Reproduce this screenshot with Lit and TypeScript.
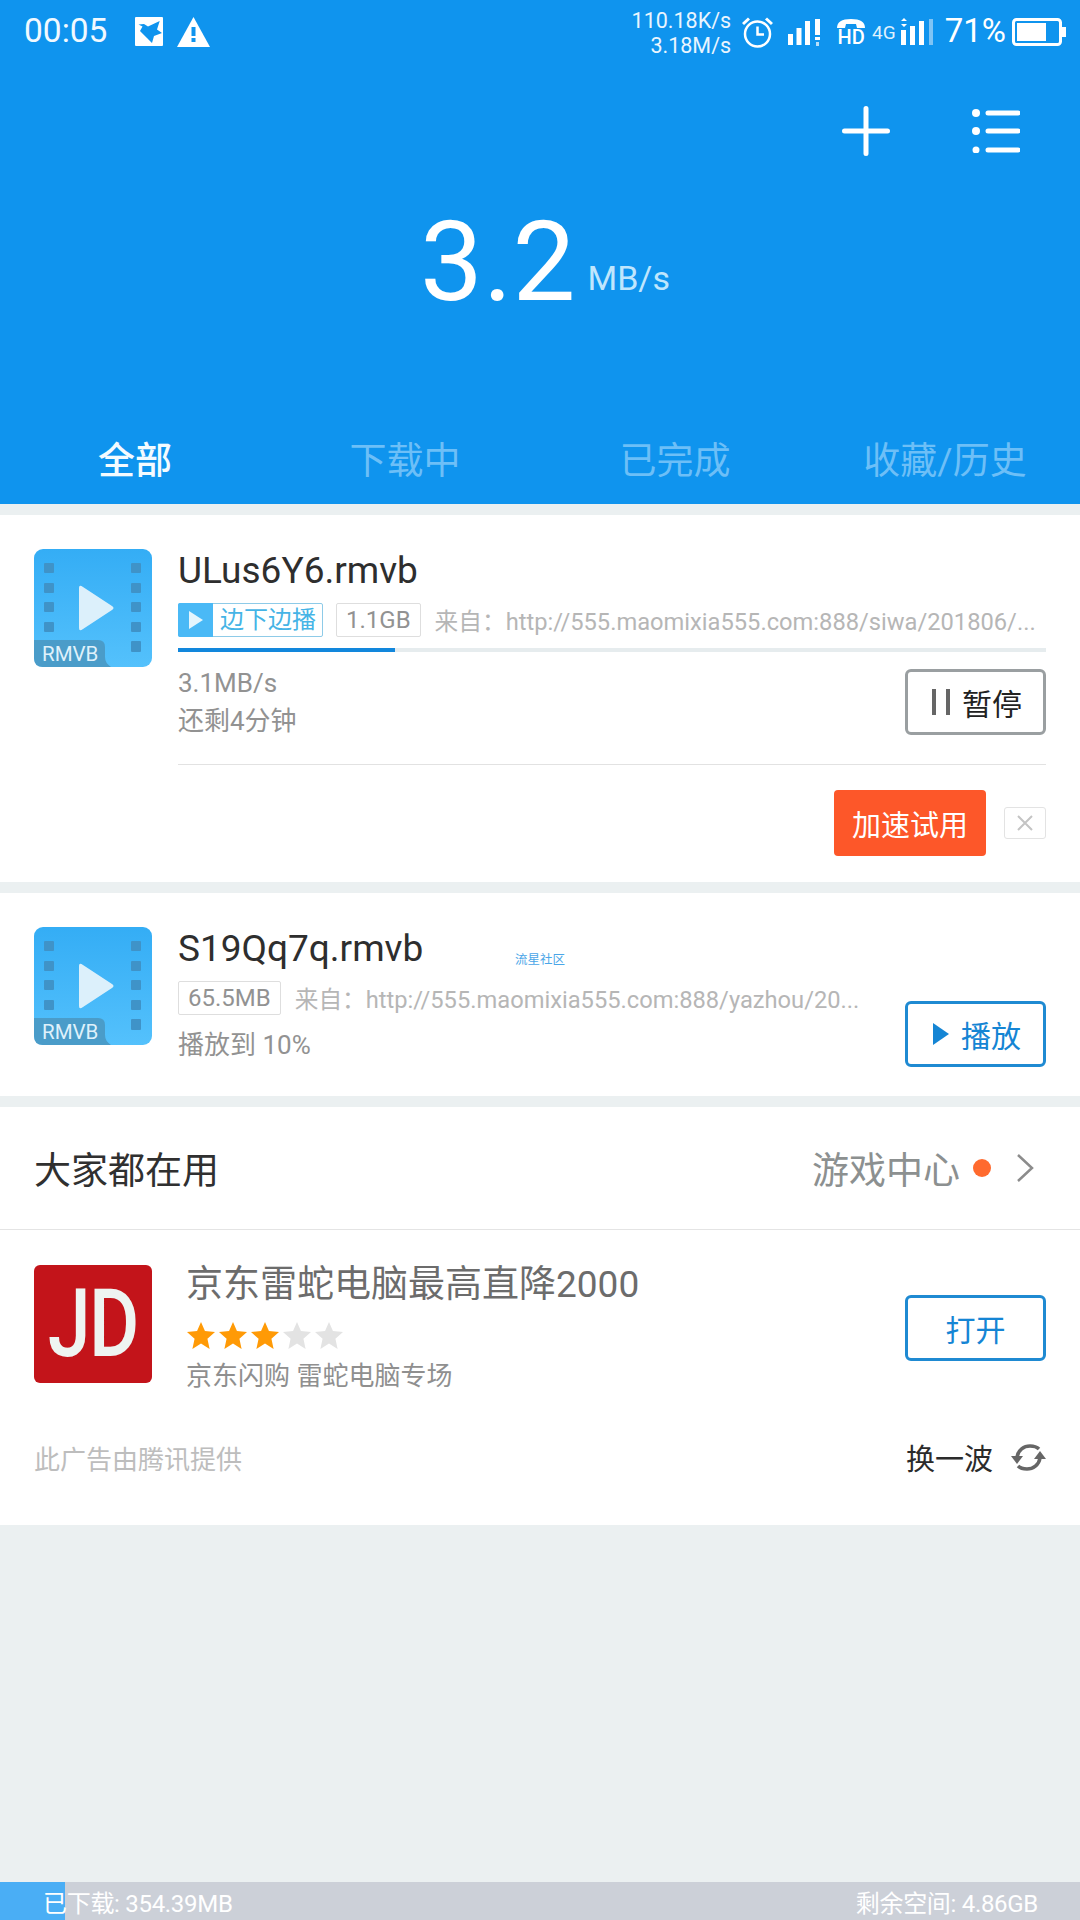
import { LitElement, html, css, svg } from "lit";
import { customElement } from "lit/decorators.js";

const fileIcon = () => html`<svg class="file-icon" viewBox="0 0 118 118" width="118" height="118">
  <defs><linearGradient id="fg" x1="0" y1="0" x2="0" y2="1"><stop offset="0" stop-color="#34adf5"/><stop offset="1" stop-color="#54c1fc"/></linearGradient></defs>
  <rect width="118" height="118" rx="9" fill="url(#fg)"/>
  ${[14, 34, 53, 73].map((y) => svg`<rect x="10" y="${y}" width="10" height="10" rx="1" fill="#3f93c8"/><rect x="97" y="${y}" width="10" height="10" rx="1" fill="#3f93c8"/>`)}
  <rect x="97" y="92" width="10" height="11" rx="1" fill="#3f93c8"/>
  <path d="M45 39 Q45 35 49 38 L78 57 Q81 59 78 61 L49 80 Q45 83 45 79 Z" fill="#dcf0fb"/>
  <path d="M0 91 H64 Q71 91 71 98 V108 Q71 114 77 118 H9 Q0 118 0 109 Z" fill="#4a9cc9"/>
  <text x="8" y="112" font-family="Roboto, sans-serif" font-size="20.500" fill="#dff1fb">RMVB</text>
</svg>`;

const star = (on: boolean) => html`<svg class="star" viewBox="0 0 27 26" width="28" height="27"><polygon points="13.5,0 17.3,8.7 27,9.7 19.7,16.1 21.8,26 13.5,20.8 5.2,26 7.3,16.1 0,9.7 9.7,8.7" fill=${on ? "#ff9a06" : "#e3e3e3"}/></svg>`;

@customElement("app-root")
export class AppRoot extends LitElement {
  static styles = css`
    :host { display: block; width: 1080px; height: 1920px; background: #ebf0f1; font-family: Roboto, "Noto Sans CJK SC", sans-serif; position: relative; overflow: hidden; }
    .page { display: flex; flex-direction: column; height: 1920px; }
    .head { background: #0f94ee; height: 504px; color: #fff; display: flex; flex-direction: column; }
    .status { display: flex; align-items: flex-start; height: 60px; padding: 0 14px 0 24px; }
    .time { font-size: 33.5px; line-height: 32px; margin-top: 15px; width: 111px; color: #f1f9ff; }
    .bird { margin-top: 17px; width: 28px; height: 29px; }
    .warn { margin: 17px 0 0 14px; }
    .spacer { flex: 1; }
    .net { font-size: 21.5px; line-height: 25px; text-align: right; margin-top: 8px; color: #e9f5fe; }
    .st-alarm { margin: 17px 0 0 11px; }
    .st-sig1 { margin: 18px 0 0 15px; }
    .hd { margin: 17px 0 0 12px; width: 34px; display: flex; flex-direction: column; align-items: center; }
    .hd span { font-size: 20px; line-height: 15px; font-weight: 500; margin-top: -1px; }
    .g4 { font-size: 19px; line-height: 20px; margin: 23px 0 0 4px; color: #dff0fd; }
    .st-sig2 { margin: 18px 0 0 3px; }
    .pct { font-size: 33px; line-height: 34px; margin: 14px 0 0 12px; }
    .st-batt { margin: 18px 0 0 6px; }
    .actions { display: flex; justify-content: flex-end; align-items: center; gap: 82px; height: 52px; margin-top: 45px; padding-right: 60px; }
    .speed { display: flex; justify-content: center; align-items: baseline; gap: 12px; padding-left: 10px; margin-top: 50px; }
    .speed b { font-weight: 400; font-size: 112px; line-height: 110px; }
    .speed span { font-size: 34px; color: #bfe6fd; position: relative; top: -10px; }
    .tabs { margin-top: auto; height: 92px; display: grid; grid-template-columns: repeat(4, 270px); align-items: center; justify-items: center; font-size: 37px; color: #6dbff7; }
    .tabs .on { color: #f4fbff; font-weight: 500; }

    .card { background: #fff; position: relative; padding: 0 34px; }
    .c1 { margin-top: 11px; padding-top: 34px; padding-bottom: 26px; }
    .c2 { margin-top: 11px; padding-top: 34px; padding-bottom: 29px; }
    .c3 { margin-top: 11px; padding: 0; height: 418px; }
    .file { display: flex; gap: 26px; }
    .file-icon { flex: none; display: block; }
    .body { flex: 1; min-width: 0; }
    .title { font-size: 37px; line-height: 44px; color: #2e2e2e; }
    .meta { display: flex; align-items: center; white-space: nowrap; }
    .c1 .meta { margin-top: 8px; height: 38px; }
    .c2 .meta { margin-top: 10px; height: 34px; }
    .play-tag { display: flex; align-items: stretch; height: 34px; border: 1px solid #8ecbe8; border-radius: 2px; box-sizing: border-box; color: #46b4e6; font-size: 24px; line-height: 32px; margin-right: 13px; padding-right: 6px; }
    .play-tag i { width: 35px; background: #4ab9f6; margin: -1px 7px -1px -1px; display: flex; align-items: center; justify-content: center; border-radius: 2px 0 0 2px; }
    .size { border: 1px solid #dedede; border-radius: 2px; height: 34px; box-sizing: border-box; line-height: 32px; padding: 0 9px; font-size: 24px; color: #929292; margin-right: 14px; }
    .src { font-size: 23.7px; color: #b6b6b6; }
    .bar { height: 4px; background: #e6ecee; margin-top: 9px; }
    .bar div { height: 4px; background: #1287dc; }
    .state { display: flex; justify-content: space-between; align-items: flex-start; margin-top: 17px; }
    .info { font-size: 26px; line-height: 38px; color: #929292; margin: -5px 0 -5px; }
    .btn { flex: none; box-sizing: border-box; width: 141px; height: 66px; border-radius: 6px; display: flex; align-items: center; justify-content: center; gap: 12px; font-size: 30px; background: #fff; }
    .pause { border: 3px solid #9a9fa1; color: #222; padding-left: 3px; }
    .blue { border: 3px solid #1f8ad2; color: #1585d4; }
    .c2 .blue { padding-left: 3px; }
    .divider { height: 1px; background: #e2e2e2; margin-top: 29px; }
    .promo { display: flex; justify-content: flex-end; align-items: center; gap: 18px; margin-top: 25px; }
    .boost { width: 152px; height: 66px; border-radius: 4px; background: #fd5729; color: #fff; font-size: 29px; display: flex; align-items: center; justify-content: center; }
    .close { width: 42px; height: 32px; box-sizing: border-box; border: 1px solid #e3e3e3; border-radius: 3px; display: flex; align-items: center; justify-content: center; }
    .c2 .body { flex: 1; display: flex; gap: 0; }
    .textcol { width: 682px; }
    .c2 .btn { margin: 74px 0 0 45px; }
    .c2 .info { margin: 13px 0 0; line-height: 34px; }
    .mark { position: absolute; left: 515px; top: 60px; font-size: 12.5px; line-height: 14px; color: #4aa6e8; }

    .c3-head { height: 123px; box-sizing: border-box; border-bottom: 1px solid #e4e4e4; display: flex; align-items: center; padding: 0 46px 0 34px; }
    .c3-head h2 { margin: 0; font-weight: 400; font-size: 37px; color: #303030; flex: 1; }
    .game { font-size: 37px; color: #8c9090; }
    .dot { width: 18px; height: 18px; border-radius: 50%; background: #ff6a2e; margin: 0 25px 0 13px; }
    .ad { display: flex; padding: 35px 34px 0; height: 118px; }
    .jd { flex: none; width: 118px; height: 118px; border-radius: 6px; background: #c3141a; color: #eef4f1; display: flex; align-items: center; justify-content: center; font-family: Roboto, sans-serif; font-weight: 500; font-size: 94px; letter-spacing: -2px; line-height: 118px; box-sizing: border-box; }
    .jd span { display: block; transform: scaleX(0.82); }
    .ad-text { flex: 1; margin-left: 34px; }
    .ad-title { font-size: 37px; line-height: 44px; color: #6c6c6c; margin-top: -2px; white-space: nowrap; }
    .stars { display: flex; gap: 4px; margin: 15px 0 0 1px; height: 27px; }
    .ad-sub { font-size: 26px; line-height: 36px; color: #8f8f8f; margin-top: 9px; white-space: nowrap; }
    .ad .btn { margin-top: 30px; }
    .ad-foot { display: flex; align-items: center; justify-content: space-between; padding: 0 34px; margin-top: 56px; height: 36px; }
    .ad-foot .by { font-size: 26px; color: #bdbdbd; }
    .swap { display: flex; align-items: center; gap: 18px; font-size: 29px; color: #2b2b2b; }

    .foot { margin-top: auto; height: 38px; background: #ccd0d8; color: #fff; display: flex; justify-content: space-between; align-items: center; padding: 0 42px 0 43px; font-size: 24px; letter-spacing: -0.3px; position: relative; }
    .foot i { position: absolute; left: 0; top: 0; width: 65px; height: 38px; background: #4aaef5; }
    .foot span { position: relative; }
  `;

  render() {
    return html`<div class="page">
      <div class="head">
        <div class="status">
          <div class="time">00:05</div>
          <svg class="bird" viewBox="0 0 28 29"><rect width="28" height="29" rx="1" fill="#fff"/><path d="M3.5 7.5 L9 7 L13 9.500 L24.700 4 L22 12.500 L27 16 L19 19 L17 26 L12 21 L5 14 L7.500 9.500 Z" fill="#0f94ee"/></svg>
          <svg class="warn" width="33" height="30" viewBox="0 0 33 30"><path d="M16.5 0 L33 30 H0 Z" fill="#fff"/><rect x="14.5" y="10" width="4" height="9" fill="#0f94ee"/><rect x="14.5" y="21" width="4" height="4" fill="#0f94ee"/></svg>
          <div class="spacer"></div>
          <div class="net">110.18K/s<br />3.18M/s</div>
          <svg class="st-alarm" width="31" height="31" viewBox="0 0 31 31" fill="none" stroke="#fff"><circle cx="15.5" cy="17" r="12.5" stroke-width="2.5"/><path d="M15.5 9.5 V17.5 H22" stroke-width="2.5"/><path d="M1 7 L7 1.5 M30 7 L24 1.5" stroke-width="3"/></svg>
          <svg class="st-sig1" width="34" height="28" viewBox="0 0 34 28" fill="#fff"><rect x="0" y="16" width="5" height="11"/><rect x="8.5" y="10" width="5" height="17"/><rect x="17" y="3" width="5" height="24"/><rect x="27" y="1" width="5" height="16"/><rect x="27" y="19" width="5" height="3"/><rect x="28" y="24" width="3" height="4" opacity=".7"/></svg>
          <div class="hd"><svg width="30" height="14" viewBox="0 0 30 14"><path d="M1 11 Q1 2 15 2 Q29 2 29 11 L21 11 L20 7 H10 L9 11 Z" fill="#fff"/></svg><span>HD</span></div>
          <div class="g4">4G</div>
          <svg class="st-sig2" width="34" height="28" viewBox="0 0 34 28" fill="#fff"><path d="M5 0 L8 3 H2 Z M5 9 L8 6 H2 Z"/><rect x="2" y="12" width="5" height="15"/><rect x="11" y="8" width="5" height="19"/><rect x="20" y="3" width="5" height="24"/><rect x="30" y="1" width="4" height="26" fill="#7fc4f5"/></svg>
          <div class="pct">71%</div>
          <svg class="st-batt" width="54" height="28" viewBox="0 0 54 28"><rect x="1.5" y="1.5" width="47" height="25" rx="3" fill="none" stroke="#fff" stroke-width="3"/><rect x="5" y="5" width="29" height="18" fill="#fff"/><rect x="50" y="9" width="4" height="10" fill="#fff"/></svg>
        </div>
        <div class="actions">
          <svg width="48" height="50" viewBox="0 0 48 50" stroke="#fff" stroke-width="5" stroke-linecap="round"><path d="M24 2.5 V47.5 M2.5 25 H45.5"/></svg>
          <svg width="48" height="44" viewBox="0 0 48 44"><g fill="#fff"><circle cx="4" cy="4" r="4"/><circle cx="4" cy="22" r="4"/><circle cx="4" cy="41" r="3.5"/></g><g stroke="#fff" stroke-width="5" stroke-linecap="round"><path d="M16 4 H46 M16 22 H46 M16 41 H46"/></g></svg>
        </div>
        <div class="speed"><b>3.2</b><span>MB/s</span></div>
        <div class="tabs"><div class="on">全部</div><div>下载中</div><div>已完成</div><div>收藏/历史</div></div>
      </div>

      <div class="card c1">
        <div class="file">
          ${fileIcon()}
          <div class="body">
            <div class="title">ULus6Y6.rmvb</div>
            <div class="meta">
              <div class="play-tag"><i><svg width="14" height="18" viewBox="0 0 14 18"><path d="M0 0 L14 9 L0 18 Z" fill="#e4f5fd"/></svg></i>边下边播</div>
              <div class="size">1.1GB</div>
              <div class="src">来自：http://555.maomixia555.com:888/siwa/201806/...</div>
            </div>
            <div class="bar"><div style="width:${(217 / 868) * 100}%"></div></div>
            <div class="state">
              <div class="info">3.1MB/s<br />还剩4分钟</div>
              <div class="btn pause"><svg width="18" height="26" viewBox="0 0 18 26"><rect x="0" y="0" width="4" height="26" fill="#666"/><rect x="14" y="0" width="4" height="26" fill="#666"/></svg>暂停</div>
            </div>
            <div class="divider"></div>
            <div class="promo">
              <div class="boost">加速试用</div>
              <div class="close"><svg width="18" height="18" viewBox="0 0 18 18" stroke="#c4c4c4" stroke-width="2"><path d="M2 2 L16 16 M16 2 L2 16"/></svg></div>
            </div>
          </div>
        </div>
      </div>

      <div class="card c2">
        <div class="file">
          ${fileIcon()}
          <div class="body">
            <div class="textcol">
              <div class="title">S19Qq7q.rmvb</div>
              <div class="meta">
                <div class="size">65.5MB</div>
                <div class="src">来自：http://555.maomixia555.com:888/yazhou/20...</div>
              </div>
              <div class="info">播放到 10%</div>
            </div>
            <div class="btn blue"><svg width="16" height="22" viewBox="0 0 16 22"><path d="M0 0 L16 11 L0 22 Z" fill="#1585d4"/></svg>播放</div>
          </div>
        </div>
        <div class="mark">流星社区</div>
      </div>

      <div class="card c3">
        <div class="c3-head">
          <h2>大家都在用</h2>
          <span class="game">游戏中心</span>
          <span class="dot"></span>
          <svg width="18" height="30" viewBox="0 0 18 30" fill="none" stroke="#8c8c8c" stroke-width="2.5"><path d="M2 2 L16 15 L2 28"/></svg>
        </div>
        <div class="ad">
          <div class="jd"><span>JD</span></div>
          <div class="ad-text">
            <div class="ad-title">京东雷蛇电脑最高直降2000</div>
            <div class="stars">${[1, 1, 1, 0, 0].map((s) => star(!!s))}</div>
            <div class="ad-sub">京东闪购 雷蛇电脑专场</div>
          </div>
          <div class="btn blue">打开</div>
        </div>
        <div class="ad-foot">
          <div class="by">此广告由腾讯提供</div>
          <div class="swap">换一波
            <svg width="35" height="27" viewBox="0 0 35 27" fill="none" stroke="#666" stroke-width="3.5"><path d="M6 13 C7 6 13 2 19 2 C23 2 26 3 28 5"/><path d="M29 14 C28 21 22 25 16 25 C12 25 9 24 7 22"/><path d="M0 12 H12 L6 20 Z" fill="#666" stroke="none"/><path d="M23 15 H35 L29 7 Z" fill="#666" stroke="none"/></svg>
          </div>
        </div>
      </div>

      <div class="foot"><i></i><span>已下载: 354.39MB</span><span>剩余空间: 4.86GB</span></div>
    </div>`;
  }
}
